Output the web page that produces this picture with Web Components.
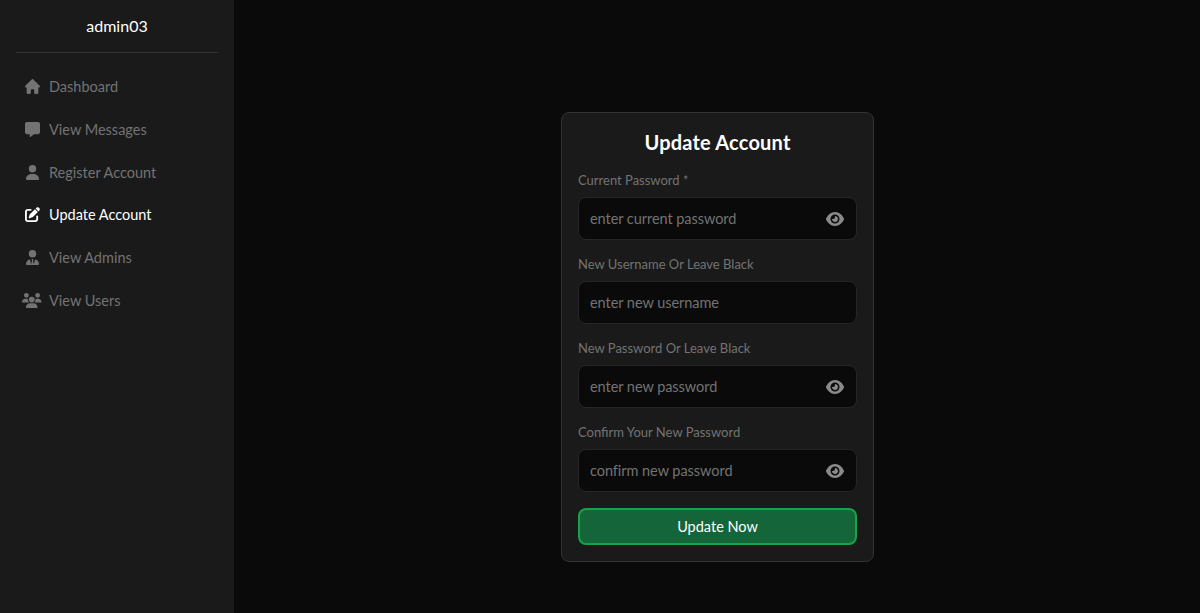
<!DOCTYPE html>
<html lang="en">
<head>
<meta charset="utf-8">
<title>Update Account</title>
<style>
  html, body { margin: 0; height: 100%; background: #0a0a0a; }
  body { font-family: "Lato", "Open Sans", sans-serif; }
  admin-layout { height: 613px; }
</style>
</head>
<body>
<admin-layout>
  <admin-sidebar slot="side" name="admin03">
    <nav-item icon="house">Dashboard</nav-item>
    <nav-item icon="message">View Messages</nav-item>
    <nav-item icon="user">Register Account</nav-item>
    <nav-item icon="pen" active>Update Account</nav-item>
    <nav-item icon="tie">View Admins</nav-item>
    <nav-item icon="users">View Users</nav-item>
  </admin-sidebar>
  <account-form heading="Update Account">
    <form-field label="Current Password *" placeholder="enter current password" eye></form-field>
    <form-field label="New Username Or Leave Black" placeholder="enter new username"></form-field>
    <form-field label="New Password Or Leave Black" placeholder="enter new password" eye></form-field>
    <form-field label="Confirm Your New Password" placeholder="confirm new password" eye></form-field>
  </account-form>
</admin-layout>

<script>
const ICONS = {
  house: ['0 0 576 512', 'M575.8 255.5c0 18-15 32.1-32 32.1h-32l.7 160.2c0 2.7-.2 5.4-.5 8.1V472c0 22.1-17.9 40-40 40H456c-1.1 0-2.2 0-3.3-.1c-1.4 .1-2.8 .1-4.2 .1H416 392c-22.1 0-40-17.9-40-40V448 384c0-17.7-14.3-32-32-32H256c-17.7 0-32 14.3-32 32v64 24c0 22.1-17.9 40-40 40H160 128.1c-1.5 0-3-.1-4.5-.2c-1.2 .1-2.4 .2-3.6 .2H104c-22.1 0-40-17.9-40-40V360c0-.9 0-1.9 .1-2.8V287.6H32c-18 0-32-14-32-32.1c0-9 3-17 10-24L266.4 8c7-7 15-8 22-8s15 2 21 7L564.8 231.5c8 7 12 15 11 24z'],
  message: ['0 0 512 512', 'M64 0C28.7 0 0 28.7 0 64V352c0 35.3 28.7 64 64 64h96v80c0 6.1 3.4 11.6 8.8 14.3s11.9 2.1 16.8-1.5L309.3 416H448c35.3 0 64-28.7 64-64V64c0-35.3-28.7-64-64-64H64z'],
  user: ['0 0 448 512', 'M224 256A128 128 0 1 0 224 0a128 128 0 1 0 0 256zm-45.7 48C79.8 304 0 383.8 0 482.3C0 498.7 13.3 512 29.7 512H418.3c16.4 0 29.7-13.3 29.7-29.7C448 383.8 368.2 304 269.7 304H178.3z'],
  pen: ['0 0 512 512', 'M471.6 21.7c-21.9-21.9-57.3-21.9-79.2 0L362.3 51.7l97.9 97.9 30.1-30.1c21.9-21.9 21.9-57.3 0-79.2L471.6 21.7zm-299.2 220c-6.1 6.1-10.8 13.6-13.5 21.9l-29.6 88.8c-2.9 8.6-.6 18.1 5.8 24.6s15.9 8.7 24.6 5.8l88.8-29.6c8.2-2.7 15.7-7.4 21.9-13.5L437.7 172.3 339.7 74.3 172.4 241.7zM96 64C43 64 0 107 0 160V416c0 53 43 96 96 96H352c53 0 96-43 96-96V320c0-17.7-14.3-32-32-32s-32 14.3-32 32v96c0 17.7-14.3 32-32 32H96c-17.7 0-32-14.3-32-32V160c0-17.7 14.3-32 32-32h96c17.7 0 32-14.3 32-32s-14.3-32-32-32H96z'],
  tie: ['0 0 448 512', 'M96 128a128 128 0 1 0 256 0A128 128 0 1 0 96 128zm94.5 200.2l18.6 31L175.8 483.1l-36-146.9c-2-8.1-9.8-13.4-17.9-11.3C51.9 342.4 0 405.8 0 481.3c0 17 13.8 30.7 30.7 30.7H162.5c0 0 0 0 .1 0H168 280h5.5c0 0 0 0 .1 0H417.3c17 0 30.7-13.8 30.7-30.7c0-75.5-51.9-138.9-121.9-156.4c-8.1-2-15.9 3.3-17.9 11.3l-36 146.9L238.9 359.2l18.6-31c6.4-10.7-1.3-24.2-13.7-24.2H224 204.3c-12.4 0-20.1 13.6-13.7 24.2z'],
  users: ['0 0 640 512', 'M144 0a80 80 0 1 1 0 160A80 80 0 1 1 144 0zM512 0a80 80 0 1 1 0 160A80 80 0 1 1 512 0zM0 298.7C0 239.8 47.8 192 106.7 192h42.7c15.9 0 31 3.5 44.6 9.7c-1.3 7.2-1.9 14.7-1.9 22.3c0 38.2 16.8 72.5 43.3 96c-.2 0-.4 0-.7 0H21.3C9.6 320 0 310.4 0 298.7zM405.3 320c-.2 0-.4 0-.7 0c26.6-23.5 43.3-57.8 43.3-96c0-7.6-.7-15-1.9-22.3c13.6-6.3 28.7-9.7 44.6-9.7h42.7C592.2 192 640 239.8 640 298.7c0 11.8-9.6 21.3-21.3 21.3H405.3zM224 224a96 96 0 1 1 192 0 96 96 0 1 1 -192 0zM128 485.3C128 411.7 187.7 352 261.3 352H378.7C452.3 352 512 411.7 512 485.3c0 14.7-11.9 26.7-26.7 26.7H154.7c-14.7 0-26.7-11.9-26.7-26.7z'],
  eye: ['0 0 576 512', 'M288 32c-80.8 0-145.5 36.8-192.6 80.6C48.6 156 17.3 208 2.5 243.7c-3.3 7.9-3.3 16.7 0 24.6C17.3 304 48.6 356 95.4 399.4C142.5 443.2 207.2 480 288 480s145.5-36.8 192.6-80.6c46.8-43.5 78.1-95.4 93-131.1c3.3-7.9 3.3-16.7 0-24.6c-14.9-35.7-46.2-87.7-93-131.1C433.5 68.8 368.8 32 288 32zM144 256a144 144 0 1 1 288 0 144 144 0 1 1 -288 0zm144-64c0 35.3-28.7 64-64 64c-7.1 0-13.9-1.2-20.3-3.3c-5.5-1.8-11.9 1.6-11.7 7.4c.3 6.9 1.3 13.8 3.2 20.7c13.7 51.2 66.4 81.6 117.6 67.9s81.6-66.4 67.9-117.6c-11.1-41.5-47.8-69.4-88.6-71.1c-5.8-.2-9.2 6.1-7.4 11.7c2.1 6.4 3.3 13.2 3.3 20.3z']
};

function iconSvg(name) {
  const [box, d] = ICONS[name];
  return `<svg class="${name}" viewBox="${box}" preserveAspectRatio="none" fill="currentColor" aria-hidden="true"><path d="${d}"/></svg>`;
}

class AdminLayout extends HTMLElement {
  constructor() {
    super();
    this.attachShadow({ mode: "open" });
    this.shadowRoot.innerHTML = `
    <style>
      :host { display: flex; background: #0a0a0a; }
      .side { flex: 0 0 234px; display: flex; }
      main { flex: 1; display: flex; align-items: center; justify-content: center; padding: 61px 0 0 1px; }
    </style>
    <div class="side"><slot name="side"></slot></div>
    <main><slot></slot></main>
    `;
  }
}
customElements.define("admin-layout", AdminLayout);

class AdminSidebar extends HTMLElement {
  constructor() {
    super();
    this.attachShadow({ mode: "open" });
  }
  connectedCallback() {
    this.shadowRoot.innerHTML = `
    <style>
      :host { display: block; width: 100%; box-sizing: border-box; background: #1a1a1a; padding: 0 16px; }
      .name { height: 53px; box-sizing: border-box; border-bottom: 1px solid #333; width: 202px; padding-top: 16px;
        text-align: center; color: #fff; font-size: 16px; line-height: 20px; letter-spacing: .05px; }
      nav { display: flex; flex-direction: column; padding-top: 12.2px; }
    </style>
    <div class="name">${this.getAttribute("name")}</div>
    <nav><slot></slot></nav>
    `;
  }
}
customElements.define("admin-sidebar", AdminSidebar);

class NavItem extends HTMLElement {
  constructor() {
    super();
    this.attachShadow({ mode: "open" });
  }
  connectedCallback() {
    this.shadowRoot.innerHTML = `
    <style>
      :host { display: flex; align-items: center; height: 42.8px; color: #737373; font-size: 14.5px; }
      :host([active]) { color: #fff; }
      .ico { flex: 0 0 18px; width: 18px; margin: 0 8px 0 7px; display: flex; justify-content: center; }
      svg { width: 15px; height: 15px; display: block; }
      svg.user, svg.tie { width: 13px; }
      svg.users { width: 19.5px; flex: none; }
    </style>
    <span class="ico">${iconSvg(this.getAttribute("icon"))}</span>
    <span><slot></slot></span>
    `;
  }
}
customElements.define("nav-item", NavItem);

class AccountForm extends HTMLElement {
  constructor() {
    super();
    this.attachShadow({ mode: "open" });
  }
  connectedCallback() {
    this.shadowRoot.innerHTML = `
    <style>
      :host { display: block; width: 313px; height: 450px; box-sizing: border-box; background: #1a1a1a; border: 1px solid #333;
        border-radius: 8px; padding: 15px 16px 16px; }
      h1 { margin: 0 0 14px; height: 28px; text-align: center; color: #fff; font-size: 20px; line-height: 28px; font-weight: 700; letter-spacing: .2px; }
      .fields { display: flex; flex-direction: column; gap: 14px; }
      button { display: block; width: 100%; height: 37px; margin-top: 16px; background: #14663a; border: 2px solid #16a34a; border-radius: 8px;
        color: #fff; font: inherit; font-size: 14.5px; padding: 0; }
    </style>
    <h1>${this.getAttribute("heading")}</h1>
    <div class="fields"><slot></slot></div>
    <button type="button">Update Now</button>
    `;
  }
}
customElements.define("account-form", AccountForm);

class FormField extends HTMLElement {
  constructor() {
    super();
    this.attachShadow({ mode: "open" });
  }
  connectedCallback() {
    const eye = this.hasAttribute("eye") ? `<span class="toggle">${iconSvg("eye")}</span>` : "";
    this.shadowRoot.innerHTML = `
    <style>
      :host { display: block; }
      label { display: block; color: #737373; font-size: 13px; line-height: 20px; margin-bottom: 7px; }
      .box { position: relative; height: 43px; box-sizing: border-box; background: #0a0a0a; border: 1px solid #262626; border-radius: 8px; }
      input { width: 100%; height: 100%; box-sizing: border-box; background: transparent; border: 0; outline: 0; padding: 0 11px 1px;
        color: #fff; font: inherit; font-size: 14.5px; letter-spacing: -.05px; }
      input::placeholder { color: #737373; opacity: 1; }
      .toggle { position: absolute; right: 12px; top: 13px; color: #8a8a8a; display: flex; }
      svg { width: 18px; height: 16px; display: block; }
    </style>
    <label>${this.getAttribute("label")}</label>
    <div class="box"><input type="text" placeholder="${this.getAttribute("placeholder")}">${eye}</div>
    `;
  }
}
customElements.define("form-field", FormField);
</script>
</body>
</html>
